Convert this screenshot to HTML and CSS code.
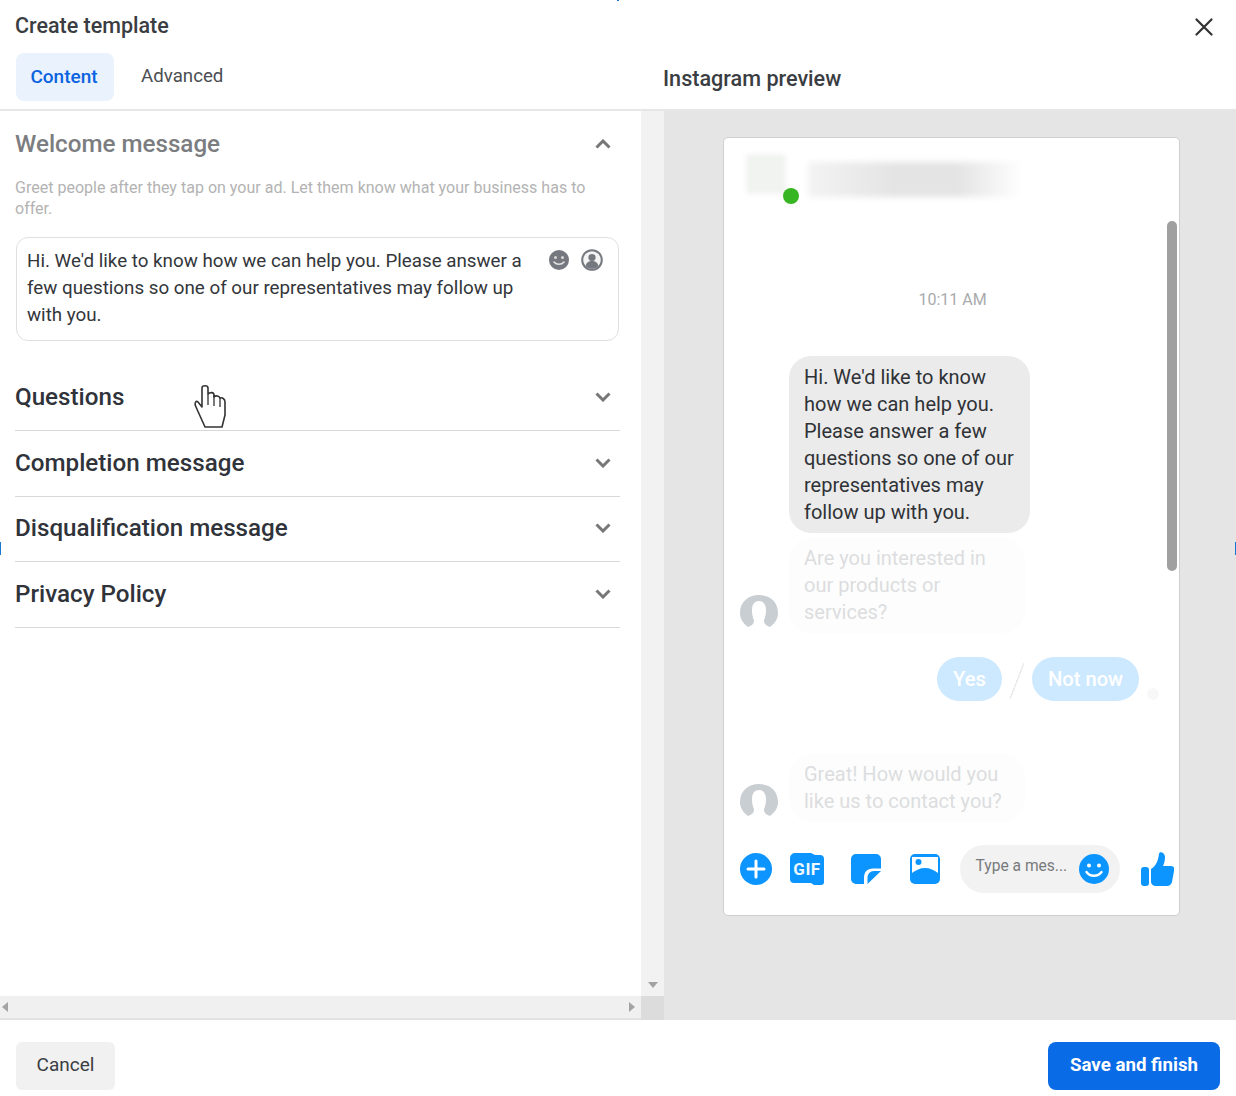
FILE: index.html
```html
<!DOCTYPE html>
<html lang="en">
<head>
<meta charset="utf-8">
<title>Create template</title>
<link rel="stylesheet" href="styles.css">
</head>
<body>
<div class="app">
  <header class="top">
    <div class="top-left">
      <h1 class="title">Create template</h1>
      <nav class="tabs">
        <span class="tab tab-active">Content</span>
        <span class="tab">Advanced</span>
      </nav>
    </div>
    <div class="top-right">
      <h2 class="preview-title">Instagram preview</h2>
      <svg class="close" viewBox="0 0 18 18" width="18" height="18"><path d="M1.5 1.5l15 15M16.5 1.5l-15 15" fill="none" stroke="#333" stroke-width="2.2" stroke-linecap="round"/></svg>
    </div>
  </header>

  <main class="main">
    <section class="editor">
      <div class="editor-row">
        <div class="form">
          <div class="welcome">
            <div class="acc-head">
              <h3 class="acc-title acc-title-muted">Welcome message</h3>
              <svg class="chev" viewBox="0 0 16 10" width="16" height="10"><path d="M1.5 8.5L8 2l6.500 6.500" fill="none" stroke="#777" stroke-width="3"/></svg>
            </div>
            <p class="desc">Greet people after they tap on your ad. Let them know what your business has to offer.</p>
            <div class="msgbox">
              <p class="msgtext">Hi. We'd like to know how we can help you. Please answer a few questions so one of our representatives may follow up with you.</p>
              <div class="msgicons">
                <svg viewBox="0 0 22 22" width="22" height="22"><circle cx="11" cy="11" r="10" fill="#75797f"/><circle cx="7.500" cy="8.500" r="1.500" fill="#d8d8d8"/><circle cx="14.500" cy="8.500" r="1.500" fill="#d8d8d8"/><path d="M6 13c2.500 3 7.500 3 10 0" fill="none" stroke="#e4e4e4" stroke-width="1.600" stroke-linecap="round"/></svg>
                <svg viewBox="0 0 22 22" width="22" height="22"><circle cx="11" cy="11" r="9.800" fill="#f4f4f4" stroke="#75797f" stroke-width="2"/><circle cx="11" cy="8.500" r="3.600" fill="#75797f"/><path d="M4.500 17c1-4 3.500-5 6.500-5s5.500 1 6.500 5c-3.500 3.500-9.500 3.500-13 0z" fill="#75797f"/></svg>
              </div>
            </div>
          </div>
          <div class="acc-row"><h3 class="acc-title">Questions</h3><svg class="chev" viewBox="0 0 16 10" width="16" height="10"><path d="M1.500 1.500L8 8l6.500-6.500" fill="none" stroke="#777" stroke-width="3"/></svg></div>
          <div class="acc-row"><h3 class="acc-title">Completion message</h3><svg class="chev" viewBox="0 0 16 10" width="16" height="10"><path d="M1.500 1.500L8 8l6.500-6.500" fill="none" stroke="#777" stroke-width="3"/></svg></div>
          <div class="acc-row"><h3 class="acc-title">Disqualification message</h3><svg class="chev" viewBox="0 0 16 10" width="16" height="10"><path d="M1.500 1.500L8 8l6.500-6.500" fill="none" stroke="#777" stroke-width="3"/></svg></div>
          <div class="acc-row"><h3 class="acc-title">Privacy Policy</h3><svg class="chev" viewBox="0 0 16 10" width="16" height="10"><path d="M1.500 1.500L8 8l6.500-6.500" fill="none" stroke="#777" stroke-width="3"/></svg></div>
        </div>
        <div class="vscroll"><span class="arrow-down"></span></div>
      </div>
      <div class="hscroll">
        <div class="hscroll-track"><span class="arrow-left"></span><span class="arrow-right"></span></div>
        <div class="corner"></div>
      </div>
    </section>

    <section class="preview">
      <div class="phone">
        <div class="phone-head">
          <div class="avatar-blur"></div>
          <div class="name-blur"></div>
        </div>
        <div class="time">10:11 AM</div>
        <div class="bubble bubble-first">Hi. We'd like to know how we can help you. Please answer a few questions so one of our representatives may follow up with you.</div>
        <div class="msg-row msg-row-a">
          <svg class="person" viewBox="0 0 38 33" width="38" height="33"><path d="M8 32C3 28 0 24 0 18 0 7 8 0 19 0s19 7 19 18c0 6-3 10-8 14-3-1-6-3-6-6 0-2 2-4 2-11 0-6-3-9-7-9s-7 3-7 9c0 7 2 9 2 11 0 3-3 5-6 6z" fill="#c9ced3"/></svg>
          <div class="bubble bubble-faded bubble-a">Are you interested in our products or services?</div>
        </div>
        <div class="replies">
          <span class="pill">Yes</span>
          <span class="slash"></span>
          <span class="pill">Not now</span>
          <span class="seen"></span>
        </div>
        <div class="msg-row msg-row-b">
          <svg class="person" viewBox="0 0 38 33" width="38" height="33"><path d="M8 32C3 28 0 24 0 18 0 7 8 0 19 0s19 7 19 18c0 6-3 10-8 14-3-1-6-3-6-6 0-2 2-4 2-11 0-6-3-9-7-9s-7 3-7 9c0 7 2 9 2 11 0 3-3 5-6 6z" fill="#c9ced3"/></svg>
          <div class="bubble bubble-faded bubble-b">Great! How would you like us to contact you?</div>
        </div>
        <div class="composer">
          <svg class="c-plus" viewBox="0 0 32 32" width="32" height="32"><circle cx="16" cy="16" r="16" fill="#0c95ff"/><path d="M16 8v16M8 16h16" stroke="#fff" stroke-width="3" stroke-linecap="round"/></svg>
          <div class="c-gif">GIF</div>
          <svg class="c-sticker" viewBox="0 0 30 30" width="30" height="30"><path d="M5 0h20a5 5 0 0 1 5 5v9.500H22C16 14.500 13 18 13 24v6H5a5 5 0 0 1-5-5V5a5 5 0 0 1 5-5z" fill="#0c95ff"/><path d="M30 17L16.500 30v-6c0-4 2.500-7 6.500-7z" fill="#0c95ff"/></svg>
          <svg class="c-photo" viewBox="0 0 30 30" width="30" height="30"><rect width="30" height="30" rx="5" fill="#0c95ff"/><path d="M2 3h26v16c-4-3-8-5-13-5S6 16 2 19z" fill="#fff"/><circle cx="8.500" cy="8" r="3" fill="#0c95ff"/></svg>
          <div class="c-input">
            <span class="c-placeholder">Type a mes...</span>
            <svg viewBox="0 0 30 30" width="30" height="30"><circle cx="15" cy="15" r="15" fill="#0c95ff"/><circle cx="10" cy="11.500" r="2" fill="#fff"/><circle cx="20" cy="11.500" r="2" fill="#fff"/><path d="M7.500 18c3.500 5 11.500 5 15 0" fill="none" stroke="#fff" stroke-width="2.400" stroke-linecap="round"/></svg>
          </div>
          <svg class="c-thumb" viewBox="0 0 33 34" width="33" height="34"><rect x="0" y="15" width="8" height="19" rx="3" fill="#0c95ff"/><path d="M10 17c5-3 7-8 8-15 0-3 6-2 6 3 0 4-1 7-2 9h8c3 0 4 3 3 5l-2 11c-1 3-3 4-5 4H15c-3 0-5-2-5-4z" fill="#0c95ff"/></svg>
        </div>
        <div class="phone-scroll"></div>
      </div>
    </section>
  </main>

  <footer class="footer">
    <button class="btn btn-cancel">Cancel</button>
    <button class="btn btn-save">Save and finish</button>
  </footer>

  <svg class="hand" viewBox="-1 -1 32 45" width="32" height="45"><path d="M10 42L1 22C-1 18 1 15 3 17L7 22V3C7 0 13 0 13 3V9C15 7 19 7 19 10V12C21 10 24 11 25 13C27 12 30 14 30 17V30L27 42Z" fill="#fff" stroke="#333" stroke-width="1.600" stroke-linejoin="round"/><path d="M13 9V20M19 10V21M25 13V22" stroke="#333" stroke-width="1.300" fill="none"/></svg>
  <span class="tick tick-top"></span>
  <span class="tick tick-left"></span>
  <span class="tick tick-right"></span>
</div>
</body>
</html>
```
FILE: styles.css
```css
* { box-sizing: border-box; }
html, body { margin: 0; padding: 0; background: #fff; }
body { font-family: Roboto, "Liberation Sans", sans-serif; color: #1c1e21; }
h1, h2, h3, p { margin: 0; font-weight: 500; }
.app { position: relative; width: 1236px; height: 1096px; overflow: hidden; display: flex; flex-direction: column; }

.top { height: 111px; flex: none; display: flex; border-bottom: 2px solid #e6e6e6; }
.top-left { width: 663px; padding: 14px 0 0 15px; }
.top-right { flex: 1; display: flex; justify-content: space-between; align-items: flex-start; }
.title { font-size: 21.500px; line-height: 24px; color: #3a3d42; }
.tabs { display: flex; margin-top: 15px; gap: 5px; padding-left: 1px; }
.tab { height: 48px; padding: 0 22px 2px 22px; display: flex; align-items: center; font-size: 18.700px; color: #4a4d52; }
.tab-active { width: 98px; padding: 0 2px 2px 0; justify-content: center; background: #e9f2fd; border-radius: 8px; color: #0a63e0; font-weight: 500; font-size: 19px; }
.preview-title { font-size: 21.600px; line-height: 24px; margin-top: 67px; color: #3a3d42; }
.close { margin: 18px 23px 0 0; }

.main { flex: 1; display: flex; min-height: 0; }
.editor { width: 664px; flex: none; display: flex; flex-direction: column; }
.editor-row { flex: 1; display: flex; min-height: 0; }
.form { width: 641px; padding: 0 21px 0 15px; }
.welcome { height: 254.400px; padding-top: 9px; }
.acc-head { display: flex; justify-content: space-between; align-items: center; height: 48px; padding-right: 9px; }
.acc-title { font-size: 24.200px; line-height: 30px; color: #30333a; }
.acc-title-muted { color: #7b7d80; }
.desc { font-size: 16.050px; line-height: 21px; color: #b3b3b3; font-weight: 400; margin-top: 9px; }
.msgbox { display: flex; justify-content: space-between; margin: 18px 0 0 1px; width: 603px; height: 104px; border: 1px solid #dedfe1; border-radius: 12px; padding: 10px 15px 0 10px; }
.msgtext { width: 510px; font-size: 18.770px; line-height: 27px; font-weight: 400; color: #33363a; }
.msgicons { display: flex; gap: 11px; padding-top: 1px; }
.acc-row { display: flex; justify-content: space-between; align-items: center; height: 65.600px; padding-right: 9px; padding-bottom: 1px; border-bottom: 1px solid #d8d8d8; }

.vscroll { width: 23px; background: #f2f2f2; position: relative; display: flex; justify-content: center; align-items: flex-end; padding-bottom: 8px; }
.arrow-down { width: 0; height: 0; border: 5px solid transparent; border-top: 6px solid #a3a3a3; border-bottom: 0; }
.hscroll { height: 24px; flex: none; display: flex; }
.hscroll-track { width: 641px; background: #f0f0f0; display: flex; justify-content: space-between; align-items: center; padding: 0 6px 0 2px; border-bottom: 2px solid #e2e2e2; }
.arrow-left { width: 0; height: 0; border: 5px solid transparent; border-right: 6px solid #a3a3a3; border-left: 0; }
.arrow-right { width: 0; height: 0; border: 5px solid transparent; border-left: 6px solid #a3a3a3; border-right: 0; }
.corner { flex: 1; background: #dcdcdc; }

.preview { flex: 1; background: #e5e5e5; padding: 26px 0 0 59px; }
.phone { position: relative; width: 457px; height: 779px; background: #fff; border: 1px solid #cfcfcf; border-radius: 5px; }
.phone-head { display: flex; padding: 16px 0 0 22px; }
.avatar-blur { width: 40px; height: 40px; background: #f1f3f1; filter: blur(2px); }
.name-blur { width: 214px; height: 35px; margin: 8px 0 0 22px; background: linear-gradient(90deg, #f3f3f3, #e4e4e4 40%, #e4e4e4 70%, #fff); filter: blur(3px); }
.phone-head::after { content: ""; position: absolute; left: 59px; top: 50px; width: 16px; height: 16px; border-radius: 50%; background: #38b522; }
.time { margin-top: 93px; height: 20px; line-height: 20px; text-align: center; font-size: 16px; color: #a9abad; padding-left: 2px; }
.bubble { font-size: 20px; line-height: 27px; color: #2f3236; padding: 7px 15px; border-radius: 22px; }
.bubble-first { width: 241px; margin: 46px 0 0 65px; padding-top: 8px; background: #ebebeb; }
.bubble-faded { color: #dcdddf; background: #fdfdfd; }
.msg-row { display: flex; align-items: flex-end; padding-left: 16px; gap: 11px; }
.msg-row-a { margin-top: 5px; }
.msg-row-b { margin-top: 53px; }
.person { flex: none; margin-bottom: 5px; }
.bubble-a { width: 236px; padding-right: 30px; }
.bubble-b { width: 236px; padding-right: 10px; }
.replies { display: flex; align-items: center; margin: 24px 0 0 213px; gap: 0; position: relative; height: 44px; }
.pill { height: 44px; padding: 0 16px; border-radius: 22px; background: #cde9ff; color: #fff; font-size: 20.200px; font-weight: 500; display: flex; align-items: center; }
.slash { width: 14px; height: 36px; margin: 3px 8px 0; background: linear-gradient(to bottom right, transparent 47%, #ececec 47%, #ececec 53%, transparent 53%); }
.seen { position: absolute; left: 210px; top: 31px; width: 12px; height: 12px; border-radius: 50%; background: #f8f8f8; }
.composer { display: flex; align-items: center; margin-top: 23px; padding-left: 16px; }
.c-plus { margin-right: 18px; }
.c-gif { width: 34px; height: 32px; clip-path: path("M5 0H21L25 2H30A4 4 0 0 1 34 6V30A3 3 0 0 1 31 32H24L21 30H4A4 4 0 0 1 0 26V5A5 5 0 0 1 5 0Z"); background: #0c95ff; color: #eef8ff; font-size: 17px; letter-spacing: 0.5px; font-weight: 700; display: flex; align-items: center; justify-content: center; margin-right: 27px; }
.c-sticker { margin-right: 29px; }
.c-photo { margin-right: 20px; }
.c-input { width: 160px; height: 48px; border-radius: 24px; background: #f2f2f2; display: flex; align-items: center; justify-content: space-between; padding: 0 11px 0 15.500px; margin-right: 21px; }
.c-placeholder { font-size: 15.600px; color: #787a7d; margin-top: -6px; white-space: nowrap; }
.phone-scroll { position: absolute; left: 443px; top: 83px; width: 10px; height: 350px; border-radius: 5px; background: #a0a0a0; }

.footer { height: 76px; flex: none; display: flex; justify-content: space-between; padding: 22px 16px 0; }
.btn { height: 48px; border: 0; padding: 0 0 3px; font-family: inherit; font-size: 19px; }
.btn-cancel { width: 99px; background: #f1f1f1; border-radius: 6px; color: #3a3d42; font-weight: 400; }
.btn-save { width: 172px; padding-bottom: 2px; background: #0a6be6; border-radius: 8px; color: #fff; font-size: 18.700px; font-weight: 700; }

.hand { position: absolute; left: 194px; top: 384px; }
.tick { position: absolute; background: #1877d2; }
.tick-top { left: 617px; top: 0; width: 2px; height: 1px; }
.tick-left { left: 0; top: 542px; width: 1px; height: 13px; }
.tick-right { left: 1235px; top: 542px; width: 1px; height: 13px; }
```
